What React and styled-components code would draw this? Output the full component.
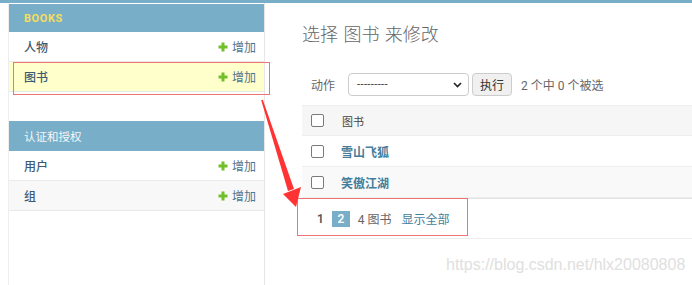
import React from "react";
import styled, { createGlobalStyle } from "styled-components";

const Global = createGlobalStyle`
  html, body { margin: 0; padding: 0; background: #fff; }
  body {
    font-family: Roboto, "Noto Sans CJK SC", sans-serif;
    font-size: 12px;
    color: #666;
    width: 692px;
    height: 285px;
    overflow: hidden;
  }
`;

const Page = styled.div`
  position: relative;
  width: 692px;
  height: 285px;
  overflow: hidden;
`;

const TopStrip = styled.div`
  height: 3px;
  background: #79aec8;
`;

const Body = styled.div`
  display: flex;
  height: 282px;
`;

const Sidebar = styled.nav`
  margin-left: 8px;
  width: 255px;
  flex: none;
  border-left: 1px solid #eee;
  border-right: 1px solid #e6e6e6;
  padding-top: 1px;
`;

const Module = styled.div`
  margin-bottom: ${(p) => p.$gap || 0}px;
`;

const Caption = styled.div`
  height: ${(p) => p.$h}px;
  background: #79aec8;
  display: flex;
  align-items: center;
  padding-left: 15px;
  font-size: ${(p) => (p.$current ? "11px" : "11.5px")};
  font-weight: ${(p) => (p.$current ? 700 : 400)};
  letter-spacing: ${(p) => (p.$current ? "0.6px" : "0")};
  color: ${(p) => (p.$current ? "#f5dd5d" : "#f4f6f8")};
`;

const ModelRow = styled.div`
  height: 29px;
  border-bottom: 1px solid #eaeaea;
  display: flex;
  align-items: center;
  justify-content: space-between;
  padding: 0 8px 0 15px;
  background: ${(p) => (p.$current ? "#ffffcc" : p.$alt ? "#f8f8f8" : "#fff")};
`;

const ModelName = styled.span`
  font-size: 12px;
  font-weight: 500;
  color: #3d5a72;
`;

const AddLink = styled.span`
  display: flex;
  align-items: center;
  gap: 4px;
  font-size: 12px;
  color: #4f7590;
`;

const Main = styled.main`
  flex: 1;
  padding-left: 37px;
  min-width: 0;
`;

const Title = styled.h1`
  margin: 21px 0 0;
  height: 22px;
  line-height: 22px;
  font-size: 18px;
  font-weight: 300;
  color: #666;
  word-spacing: 1px;
`;

const Actions = styled.div`
  margin-top: 27px;
  height: 23px;
  display: flex;
  align-items: center;
  padding-left: 9px;
  font-size: 12px;
  color: #666;
`;

const ActionLabel = styled.span`
  margin-right: 13px;
`;

const Select = styled.div`
  height: 21px;
  border: 1px solid #ccc;
  border-radius: 4px;
  display: flex;
  align-items: center;
  justify-content: space-between;
  padding: 0 6px 0 8px;
  box-sizing: content-box;
  width: 105px;
  color: #333;
  font-size: 11px;
  letter-spacing: 0.4px;
`;

const Button = styled.div`
  margin-left: 3px;
  width: 38px;
  height: 21px;
  border: 1px solid #ccc;
  border-radius: 4px;
  background: #f0f0f0;
  display: flex;
  align-items: center;
  justify-content: center;
  color: #333;
  font-size: 12px;
`;

const Counter = styled.span`
  margin-left: 9px;
`;

const Table = styled.div`
  margin-top: 9px;
  width: 100%;
`;

const Row = styled.div`
  display: flex;
  align-items: center;
  padding-left: 9px;
  border-bottom: 1px solid #eee;
  background: ${(p) => (p.$head ? "#f6f6f6" : p.$alt ? "#f9f9f9" : "#fff")};
  border-top: ${(p) => (p.$head ? "1px solid #eee" : "none")};
  height: ${(p) => (p.$head ? 29 : 30)}px;
`;

const Check = styled.span`
  width: 11px;
  height: 11px;
  border: 1px solid #7a7a7a;
  border-radius: 2px;
  background: #fff;
  flex: none;
`;

const HeadCell = styled.span`
  margin-left: 18px;
  font-size: 11px;
  color: #444;
`;

const LinkCell = styled.span`
  margin-left: 17px;
  font-size: 12px;
  font-weight: 600;
  color: #447e9b;
`;

const Paginator = styled.div`
  height: 39px;
  border-top: 1px solid #e2e2e2;
  border-bottom: 1px solid #eee;
  display: flex;
  align-items: center;
  padding-left: 15px;
  font-size: 12px;
  color: #666;
`;

const PageNum = styled.span`
  height: 16px;
  display: flex;
  align-items: center;
  justify-content: center;
  font-weight: 600;
  width: ${(p) => (p.$on ? "18px" : "auto")};
  margin-right: ${(p) => p.$mr || 0}px;
  color: ${(p) => (p.$on ? "#fff" : "#555")};
  background: ${(p) => (p.$on ? "#79aec8" : "transparent")};
`;

const ShowAll = styled.span`
  margin-left: 10px;
  color: #447e9b;
`;

const Mark = styled.div`
  position: absolute;
  left: ${(p) => p.$x}px;
  top: ${(p) => p.$y}px;
  width: ${(p) => p.$w}px;
  height: ${(p) => p.$h}px;
  border: 1px solid #f07474;
  box-sizing: border-box;
  pointer-events: none;
`;

const ArrowLayer = styled.svg`
  position: absolute;
  left: 0;
  top: 0;
  pointer-events: none;
`;

const Watermark = styled.div`
  position: absolute;
  left: 446px;
  top: 256px;
  font-family: "Liberation Sans", Arial, sans-serif;
  font-size: 16px;
  color: #e0e0e0;
  white-space: nowrap;
`;

const Plus = () => (
  <svg width="10" height="10" viewBox="0 0 10 10">
    <path d="M5 0.5V9.5M0.5 5H9.5" stroke="#70bf2b" strokeWidth="3" />
  </svg>
);

const Chevron = () => (
  <svg width="9" height="6" viewBox="0 0 9 6">
    <path d="M1 1L4.5 4.5L8 1" stroke="#222" strokeWidth="1.6" fill="none" />
  </svg>
);

const models1 = [
  { name: "人物" },
  { name: "图书", current: true },
];
const models2 = [{ name: "用户" }, { name: "组", alt: true }];

export default function App() {
  return (
    <Page>
      <Global />
      <TopStrip />
      <Body>
        <Sidebar>
          <Module $gap={29}>
            <Caption $h={28} $current>BOOKS</Caption>
            {models1.map((m) => (
              <ModelRow key={m.name} $current={m.current}>
                <ModelName>{m.name}</ModelName>
                <AddLink>
                  <Plus />
                  增加
                </AddLink>
              </ModelRow>
            ))}
          </Module>
          <Module>
            <Caption $h={30}>认证和授权</Caption>
            {models2.map((m) => (
              <ModelRow key={m.name} $alt={m.alt}>
                <ModelName>{m.name}</ModelName>
                <AddLink>
                  <Plus />
                  增加
                </AddLink>
              </ModelRow>
            ))}
          </Module>
        </Sidebar>
        <Main>
          <Title>选择 图书 来修改</Title>
          <Actions>
            <ActionLabel>动作</ActionLabel>
            <Select>
              <span>---------</span>
              <Chevron />
            </Select>
            <Button>执行</Button>
            <Counter>2 个中 0 个被选</Counter>
          </Actions>
          <Table>
            <Row $head>
              <Check />
              <HeadCell>图书</HeadCell>
            </Row>
            <Row>
              <Check />
              <LinkCell>雪山飞狐</LinkCell>
            </Row>
            <Row $alt>
              <Check />
              <LinkCell>笑傲江湖</LinkCell>
            </Row>
          </Table>
          <Paginator>
            <PageNum $mr={8}>1</PageNum>
            <PageNum $on $mr={8}>2</PageNum>
            <span>4 图书</span>
            <ShowAll>显示全部</ShowAll>
          </Paginator>
        </Main>
      </Body>
      <Mark $x={13} $y={62} $w={257} $h={33} />
      <Mark $x={297} $y={198} $w={171} $h={38} />
      <ArrowLayer width="692" height="285" viewBox="0 0 692 285">
        <polygon
          points="261.2,100.3 262.8,99.7 294,189 288,191"
          fill="#ff3333"
        />
        <polygon points="283,194 301,187 296,207" fill="#ff3333" />
      </ArrowLayer>
      <Watermark>https://blog.csdn.net/hlx20080808</Watermark>
    </Page>
  );
}
